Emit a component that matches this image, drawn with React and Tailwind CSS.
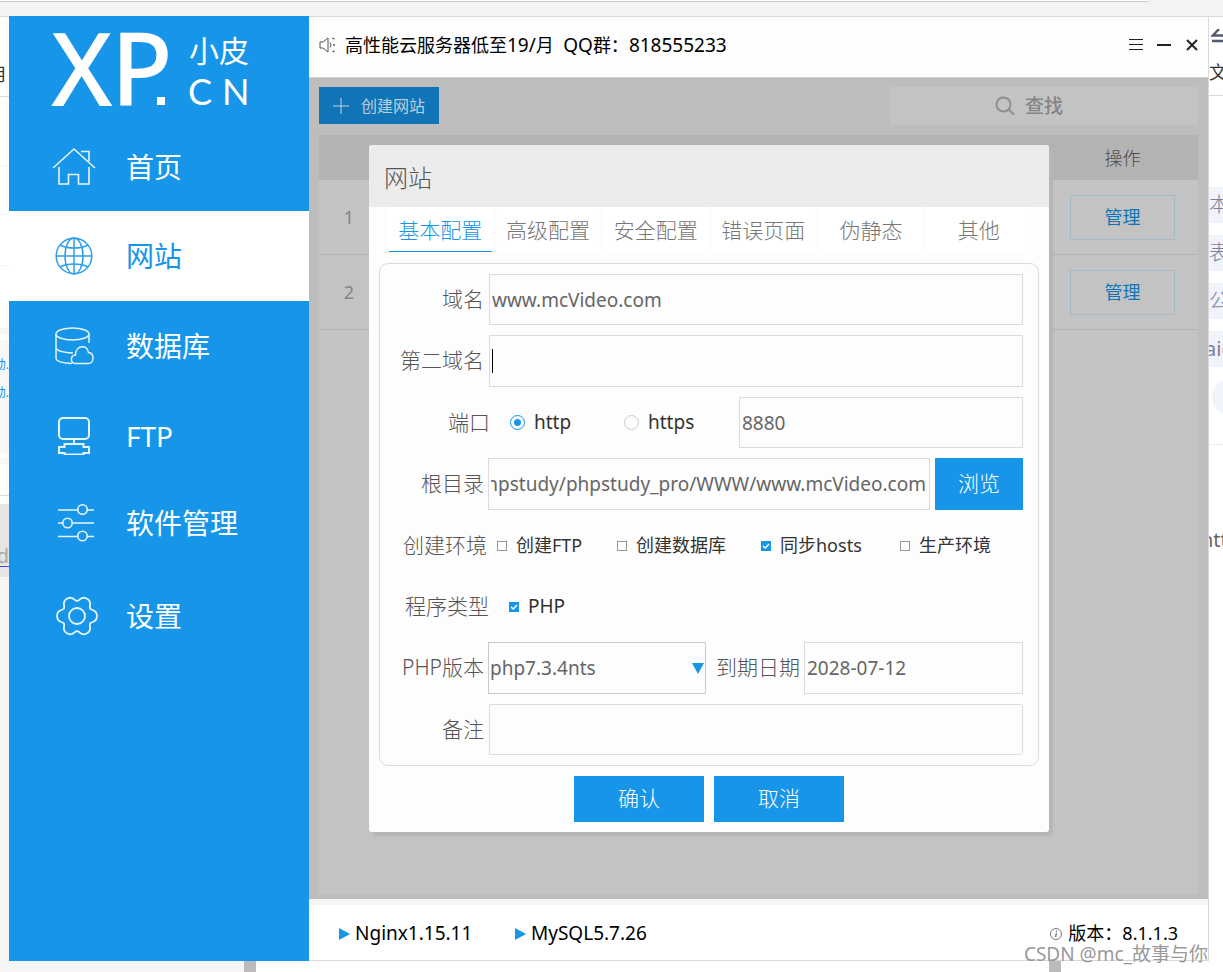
import { useState } from 'react'

const NAV = [
  { id: 'home', label: '首页', Icon: HomeIcon, height: 'h-[88px]' },
  { id: 'site', label: '网站', Icon: GlobeIcon, height: 'h-[90px]' },
  { id: 'db', label: '数据库', Icon: DatabaseIcon, height: 'h-[90px]' },
  { id: 'ftp', label: 'FTP', Icon: FtpIcon, height: 'h-[90px]' },
  { id: 'soft', label: '软件管理', Icon: SlidersIcon, height: 'h-[84px]' },
  { id: 'config', label: '设置', Icon: GearIcon, height: 'h-[102px]' },
]

const TABS = ['基本配置', '高级配置', '安全配置', '错误页面', '伪静态', '其他']

const ENVS = [
  { label: '创建FTP', on: false, width: 'w-[120px]' },
  { label: '创建数据库', on: false, width: 'w-[144px]' },
  { label: '同步hosts', on: true, width: 'w-[139px]' },
  { label: '生产环境', on: false, width: 'w-[100px]' },
]

const GEAR_POINTS = Array.from({ length: 120 }, (_, i) => {
  const a = (i * Math.PI) / 60
  const r = 18 + 2.4 * Math.cos(6 * a) - 0.5 * Math.cos(12 * a)
  return `${(21 + r * Math.cos(a)).toFixed(2)},${(21 + r * Math.sin(a)).toFixed(2)}`
}).join(' ')

function HomeIcon() {
  return (
    <svg width="44" height="40" viewBox="0 0 44 40" fill="none" stroke="currentColor" strokeWidth="1.6">
      <path d="M1 21 22 2l21 19" />
      <path d="M29 4.500h8v10" />
      <path d="M7 20v17h9.500v-9.500h10V37H37V20" />
    </svg>
  )
}

function GlobeIcon() {
  return (
    <svg width="38" height="40" viewBox="0 0 38 40" fill="none" stroke="currentColor" strokeWidth="1.500">
      <circle cx="19" cy="20" r="17.800" />
      <path d="M19 2v36M1 20h36" />
      <ellipse cx="19" cy="20" rx="9" ry="18" />
      <path d="M5 9c7 4 21 4 28 0M5 31c7-4 21-4 28 0" />
    </svg>
  )
}

function DatabaseIcon() {
  return (
    <svg width="40" height="38" viewBox="0 0 40 38" fill="none" stroke="currentColor" strokeWidth="1.500">
      <ellipse cx="18.500" cy="7" rx="16.500" ry="6" />
      <path d="M2 7v24c0 3 7 5 16 5.500M35 7v9M2 21c1 3 8 4.500 17 5" />
      <path d="M22 36.500c-6 0-6-8-.5-8.500 0-10 12-11 13-2.500 6 .5 6 11 0 11z" />
    </svg>
  )
}

function FtpIcon() {
  return (
    <svg width="34" height="38" viewBox="0 0 34 38" fill="none" stroke="currentColor" strokeWidth="2">
      <rect x="2" y="1" width="30" height="21" rx="4" />
      <path d="M17 22v5M7.500 27h19v3H32v6h-5.500v1.500h-19V36H2v-6h5.500z" />
    </svg>
  )
}

function SlidersIcon() {
  return (
    <svg width="42" height="38" viewBox="0 0 42 38" fill="none" stroke="currentColor" strokeWidth="1.600">
      <path d="M5 6h19.500M34 6h7M5 19h5M19.500 19H41M5 32.500h19.500M34 32.500h7" />
      <circle cx="29.500" cy="5.500" r="4.700" />
      <circle cx="14.500" cy="19" r="4.700" />
      <circle cx="29.500" cy="32" r="4.700" />
    </svg>
  )
}

function GearIcon() {
  return (
    <svg width="48" height="42" viewBox="-6 0 48 42" fill="none" stroke="currentColor" strokeWidth="1.800">
      <polygon points={GEAR_POINTS} strokeLinejoin="round" />
      <circle cx="21" cy="21" r="8" />
    </svg>
  )
}

function Logo() {
  return (
    <svg width="300" height="107" viewBox="0 0 300 107" fill="white">
      <text x="42" y="90" fontSize="101" fontWeight="500" fontFamily="'Noto Sans', sans-serif">X</text>
      <text x="102" y="90" fontSize="101" fontWeight="500" fontFamily="'Noto Sans', sans-serif">P</text>
      <rect x="148" y="81" width="8" height="8" />
      <text x="180" y="46" fontSize="30" fontFamily="'Noto Sans CJK SC', sans-serif">小皮</text>
      <text x="179" y="89" fontSize="36" fontFamily="Lato, sans-serif">C</text>
      <text x="213" y="89" fontSize="36" fontFamily="Lato, sans-serif">N</text>
    </svg>
  )
}

function Sidebar() {
  return (
    <nav className="w-[300px] shrink-0 bg-[#1695e9]">
      <Logo />
      {NAV.map(({ id, label, Icon, height }) => (
        <a
          key={id}
          href={`#${id}`}
          className={`flex items-center ${height} ${id === 'site' ? 'bg-white text-[#1695e9]' : 'text-white'}`}
        >
          <span className="ml-[41px] flex w-12 justify-center opacity-90">
            <Icon />
          </span>
          <span className="ml-7 text-[28px] leading-8">{label}</span>
        </a>
      ))}
    </nav>
  )
}

function TopBar() {
  return (
    <header className="flex h-[62px] shrink-0 items-center border-t border-b border-t-[#d9d9d9] border-b-[#cfcfcf] bg-[#fdfdfd] pr-2 pl-2.5 text-black">
      <svg width="16" height="16" viewBox="0 0 16 16" fill="none" stroke="#555" className="mb-1">
        <path d="M1 5h3l5-4v14l-5-4H1z" />
        <path d="M11 5.500q2 2.500 0 5" />
        <path d="M13.500 1.500h2M14 8h2M13.500 14.500h2" strokeWidth="1.500" />
      </svg>
      <p className="mb-1 ml-2.5 text-[18px] whitespace-pre">
        高性能云服务器低至<span className="text-[19px]">19/</span>月{'  '}
        <span className="text-[19px]">QQ</span>群：<span className="text-[19px]">818555233</span>
      </p>
      <div className="mb-1 ml-auto flex items-center gap-3">
        <button aria-label="菜单">
          <svg width="16" height="16" viewBox="0 0 16 16" stroke="#222">
            <path d="M1 2.500h14M1 7.500h14M1 12.500h14" />
          </svg>
        </button>
        <button aria-label="最小化">
          <svg width="16" height="16" viewBox="0 0 16 16" stroke="#222" strokeWidth="2">
            <path d="M1 8h14" />
          </svg>
        </button>
        <button aria-label="关闭">
          <svg width="16" height="16" viewBox="0 0 16 16" stroke="#222" strokeWidth="2">
            <path d="m3 3 10 10M13 3 3 13" />
          </svg>
        </button>
      </div>
    </header>
  )
}

function SiteList() {
  return (
    <div className="flex min-h-[821px] flex-1 flex-col bg-[#bdbdbd] px-2.5 pt-[9px] pb-[5px]">
      <div className="mb-2.5 flex h-[38px] items-start justify-between">
        <button className="flex h-[37px] w-[120px] items-center bg-[#1074b6] text-[#b9cfde]">
          <svg width="16" height="16" viewBox="0 0 16 16" stroke="#c5d5df" className="ml-3.5">
            <path d="M8 0v16M0 8h16" />
          </svg>
          <span className="ml-3 text-[16px] leading-5">创建网站</span>
        </button>
        <label className="flex h-[38px] w-[308px] items-center bg-[#c3c3c3] pl-[105px]">
          <svg width="20" height="20" viewBox="0 0 20 20" fill="none" stroke="#8e8e8e" strokeWidth="2">
            <circle cx="8.500" cy="8.500" r="7" />
            <path d="m13.500 13.500 5.500 5" />
          </svg>
          <input placeholder="查找" className="ml-2.5 w-20 bg-transparent text-[19px] font-medium outline-none placeholder:text-[#858585]" />
        </label>
      </div>
      <div className="flex-1 bg-[#c3c3c3]">
        <table className="w-full table-fixed border-separate border-spacing-0 text-[18px] font-light">
          <thead>
            <tr className="h-[45px] bg-[#b3b3b3] text-[#4c4c4c]">
              <th className="w-[60px]" aria-label="序号" />
              <th />
              <th className="w-[151px] pt-0.5 font-light">操作</th>
            </tr>
          </thead>
          <tbody>
            {[1, 2].map((n) => (
              <tr key={n} className="h-[75px]">
                <td className="border-b border-[#b3b3b3] text-center font-normal text-[#858585]">{n}</td>
                <td className="border-b border-[#b3b3b3]" />
                <td className="border-b border-[#b3b3b3] text-center">
                  <button className="h-[45px] w-[105px] border border-[#a6bac6] font-normal text-[#1074b6]">管理</button>
                </td>
              </tr>
            ))}
          </tbody>
        </table>
      </div>
    </div>
  )
}

function Check({ label, on }) {
  return (
    <label className="flex items-center gap-[9px]">
      <span className="relative flex size-2.5">
        <input
          type="checkbox"
          defaultChecked={on}
          className="peer size-2.5 appearance-none border border-[#999] checked:border-[#1695e9] checked:bg-[#1695e9]"
        />
        <svg viewBox="0 0 10 10" fill="none" stroke="white" strokeWidth="1.500" className="pointer-events-none absolute inset-0 hidden peer-checked:block">
          <path d="m2 5 2.300 2L8 3" />
        </svg>
      </span>
      <span className="whitespace-nowrap">{label}</span>
    </label>
  )
}

function Radio({ label, on }) {
  return (
    <label className="flex w-[114px] items-center gap-[9px]">
      <input
        type="radio"
        name="scheme"
        defaultChecked={on}
        className="size-[15px] appearance-none rounded-full border border-[#ccc] checked:border-[#1695e9] checked:bg-[radial-gradient(circle,#1695e9_3px,transparent_4px)]"
      />
      {label}
    </label>
  )
}

const field = 'min-w-0 h-full border border-[#dcdcdc] bg-transparent pl-[2px] text-[19px] text-[#666] outline-none'
const label = 'shrink-0 text-right text-[21px] font-light text-[#555]'

function SiteDialog() {
  const [tab, setTab] = useState('基本配置')

  return (
    <section
      role="dialog"
      aria-label="网站"
      className="absolute top-[67px] right-[159px] left-[60px] rounded-[3px] bg-[#fdfdfd] pb-2.5 shadow-[4px_4px_2px_#b6b6b6]"
    >
      <h2 className="flex h-[62px] items-center rounded-t-[3px] bg-[#ececec] pl-[15px] text-[24px] font-light text-[#555]">
        <span className="pt-1">网站</span>
      </h2>

      <div className="flex gap-[5px] pr-[19px] pl-5">
        {TABS.map((name) => (
          <button
            key={name}
            onClick={() => setTab(name)}
            className={`h-[45px] flex-1 border-b bg-white pt-1 text-[21px] font-light ${
              tab === name ? 'border-[#1695e9] text-[#1695e9]' : 'border-white text-[#777]'
            }`}
          >
            {name}
          </button>
        ))}
      </div>

      <form className="mx-2.5 mt-[11px] flex flex-col gap-2.5 rounded-[9px] border border-[#dcdcdc] py-2.5 pr-[15px] text-[19px] text-[#333]">
        <div className="flex h-[51px] items-center gap-[5px]">
          <label htmlFor="domain" className={`${label} w-[104px]`}>域名</label>
          <input id="domain" defaultValue="www.mcVideo.com" className={`${field} flex-1`} />
        </div>

        <div className="flex h-[52px] items-center gap-[5px]">
          <label htmlFor="domain2" className={`${label} w-[104px]`}>第二域名</label>
          <div className="relative h-full flex-1">
            <input id="domain2" className={`${field} w-full`} />
            <span className="absolute top-3.5 left-[3px] h-6 w-px bg-black" />
          </div>
        </div>

        <div className="flex h-[51px] items-center">
          <label htmlFor="port" className={`${label} w-[110px]`}>端口</label>
          <div className="mr-px ml-5 flex">
            <Radio label="http" on />
            <Radio label="https" />
          </div>
          <input id="port" defaultValue="8880" className={`${field} flex-1`} />
        </div>

        <div className="flex h-[52px] items-center gap-1">
          <label htmlFor="root-dir" className={`${label} w-[104px]`}>根目录</label>
          <input
            id="root-dir"
            dir="rtl"
            defaultValue="D:/phpstudy/phpstudy_pro/WWW/www.mcVideo.com"
            className={`${field} flex-1 pr-[3px] pl-0`}
          />
          <button type="button" className="ml-px h-full w-[88px] bg-[#1695e9] text-[21px] font-light text-white">浏览</button>
        </div>

        <div role="group" aria-label="创建环境" className="flex h-[51px] items-center">
          <span className={`${label} mr-2.5 w-[107px]`}>创建环境</span>
          {ENVS.map((env) => (
            <div key={env.label} className={`text-[18px] ${env.width}`}>
              <Check label={env.label} on={env.on} />
            </div>
          ))}
        </div>

        <div role="group" aria-label="程序类型" className="flex h-[51px] items-center gap-5">
          <span className={`${label} w-[109px]`}>程序类型</span>
          <Check label="PHP" on />
        </div>

        <div className="flex h-[52px] items-center gap-1">
          <label htmlFor="php" className={`${label} w-[104px]`}>PHP版本</label>
          <div className="relative h-full flex-1">
            <select id="php" className="h-full w-full appearance-none border border-[#c8c8c8] pl-px text-[19px] text-[#666] outline-none">
              <option>php7.3.4nts</option>
            </select>
            <svg width="12" height="12" viewBox="0 0 12 12" fill="#1695e9" className="pointer-events-none absolute top-5 right-0.5">
              <path d="M0 1h12L6 12z" />
            </svg>
          </div>
          <label htmlFor="expire" className={`${label} ml-1.5`}>到期日期</label>
          <input id="expire" defaultValue="2028-07-12" className={`${field} w-[219px]`} />
        </div>

        <div className="flex h-[51px] items-center gap-[5px]">
          <label htmlFor="note" className={`${label} w-[104px]`}>备注</label>
          <input id="note" className={`${field} flex-1 rounded-r-[3px]`} />
        </div>
      </form>

      <div className="mt-2.5 flex justify-center gap-2.5">
        <button className="h-[46px] w-[130px] bg-[#1695e9] text-[21px] font-light text-white">确认</button>
        <button className="h-[46px] w-[130px] bg-[#1695e9] text-[21px] font-light text-white">取消</button>
      </div>
    </section>
  )
}

function Play() {
  return (
    <svg width="11" height="12" viewBox="0 0 11 12" fill="#1695e9">
      <path d="M0 0v12l11-6z" />
    </svg>
  )
}

function StatusBar() {
  return (
    <footer className="flex h-[62px] shrink-0 items-center border-t-[6px] border-b border-t-[#f5f5f5] border-b-[#d9d9d9] bg-white px-[30px] pt-0.5 text-[19px] text-black">
      <span className="flex w-44 items-center gap-[5px]"><Play />Nginx1.15.11</span>
      <span className="flex items-center gap-[5px]"><Play />MySQL5.7.26</span>
      <span className="ml-auto flex items-center gap-1.5 text-[18px]">
        <svg width="12" height="12" viewBox="0 0 12 12" fill="none" stroke="#777">
          <circle cx="6" cy="6" r="5.500" />
          <path d="M6.500 5 5.500 9M6.500 2.500v1.500" strokeWidth="1.300" />
        </svg>
        版本：8.1.1.3
      </span>
    </footer>
  )
}

// Slices of the browser page that stay visible around the window
function PageLeft() {
  return (
    <aside className="flex w-[9px] shrink-0 flex-col overflow-hidden bg-[#f5f5f5]">
      <div className="flex h-[81px] items-center justify-end border-t border-b border-[#d9d9d9] bg-white pt-9 pr-[3px] text-[18px] text-[#333]">用</div>
      <div className="h-[69px] border-b border-[#f3f3f3] bg-white" />
      <div className="h-[49px] border-b border-[#f3f3f3] bg-white" />
      <div className="h-[51px] border-b border-[#f3f3f3] bg-white" />
      <div className="h-[62px] bg-white" />
      <div className="h-1.5 bg-[#f5f5f5]" />
      <div className="h-1.5 bg-white" />
      <div className="flex h-[113px] flex-col items-end bg-[#f7f7f7] pt-[11px] text-[12px] leading-7 text-[#1695e9]">
        <span>动.</span>
        <span>动.</span>
      </div>
      <div className="h-[5px] bg-white" />
      <div className="h-1.5 bg-[#f7f7f7]" />
      <div className="h-8 border-b border-[#d9d9d9] bg-white" />
      <div className="h-2 bg-white" />
      <div className="flex h-[73px] items-end justify-end bg-[#e5e5e5] pb-2.5 text-[20px] leading-5 text-[#aaa]">
        <a href="#d" className="border-b border-[#3d4cff]">d</a>
      </div>
    </aside>
  )
}

function PageRight() {
  return (
    <aside className="flex w-[14px] shrink-0 flex-col overflow-hidden border-t border-[#d9d9d9] bg-white text-[20px] text-[#7a7f9e]">
      <svg width="14" height="16" viewBox="0 0 14 16" fill="none" stroke="#555a70" strokeWidth="2.500" className="mt-3 shrink-0">
        <path d="M10 0 4 6.500h10M3 12h11" />
      </svg>
      <div className="flex h-[51px] shrink-0 items-center border-b border-[#d9d9d9] pt-1 text-[18px] text-[#333]">文</div>
      <div className="mt-[91px] flex shrink-0 flex-col gap-3 leading-9 font-light">
        {['本', '表', '公'].map((t) => (
          <span key={t} className="h-9 bg-[#f0f3f9]">{t}</span>
        ))}
        <span className="-ml-1 h-9 bg-[#f0f3f9] font-normal">aid</span>
      </div>
      <div className="mt-3 ml-[3px] size-9 shrink-0 rounded-full bg-[#f0f3f9]" />
      <div className="mt-[29px] border-t border-[#eee]" />
      <div className="mt-20 -ml-2 text-[#666]">htt</div>
    </aside>
  )
}

export default function App() {
  return (
    <div className="relative flex min-h-screen flex-col overflow-hidden bg-white font-['Noto_Sans','Noto_Sans_CJK_SC',sans-serif]">
      <div className="h-4 shrink-0 bg-[#f3f3f3] pr-[74px]">
        <div className="h-0.5 rounded-br-full border-b border-[#c8c8c8] bg-white" />
      </div>
      <div className="flex flex-1">
        <PageLeft />
        <div className="flex min-w-0 flex-1 flex-col">
          <div className="flex flex-1">
            <Sidebar />
            <main className="flex min-w-0 flex-1 flex-col border-r border-[#d9d9d9]">
              <TopBar />
              <div className="relative flex flex-1 flex-col">
                <SiteList />
                <SiteDialog />
              </div>
              <StatusBar />
            </main>
          </div>
          <div className="flex h-[11px] shrink-0">
            <div className="w-[235px] bg-[#f5f5f5]" />
            <div className="w-3 bg-[#bbb]" />
            <div className="ml-auto mr-[148px] w-3 bg-[#bbb]" />
          </div>
        </div>
        <PageRight />
      </div>
      <p className="pointer-events-none absolute right-[15px] bottom-1 text-[19px] leading-7 text-[#999]">CSDN @mc_故事与你</p>
    </div>
  )
}
